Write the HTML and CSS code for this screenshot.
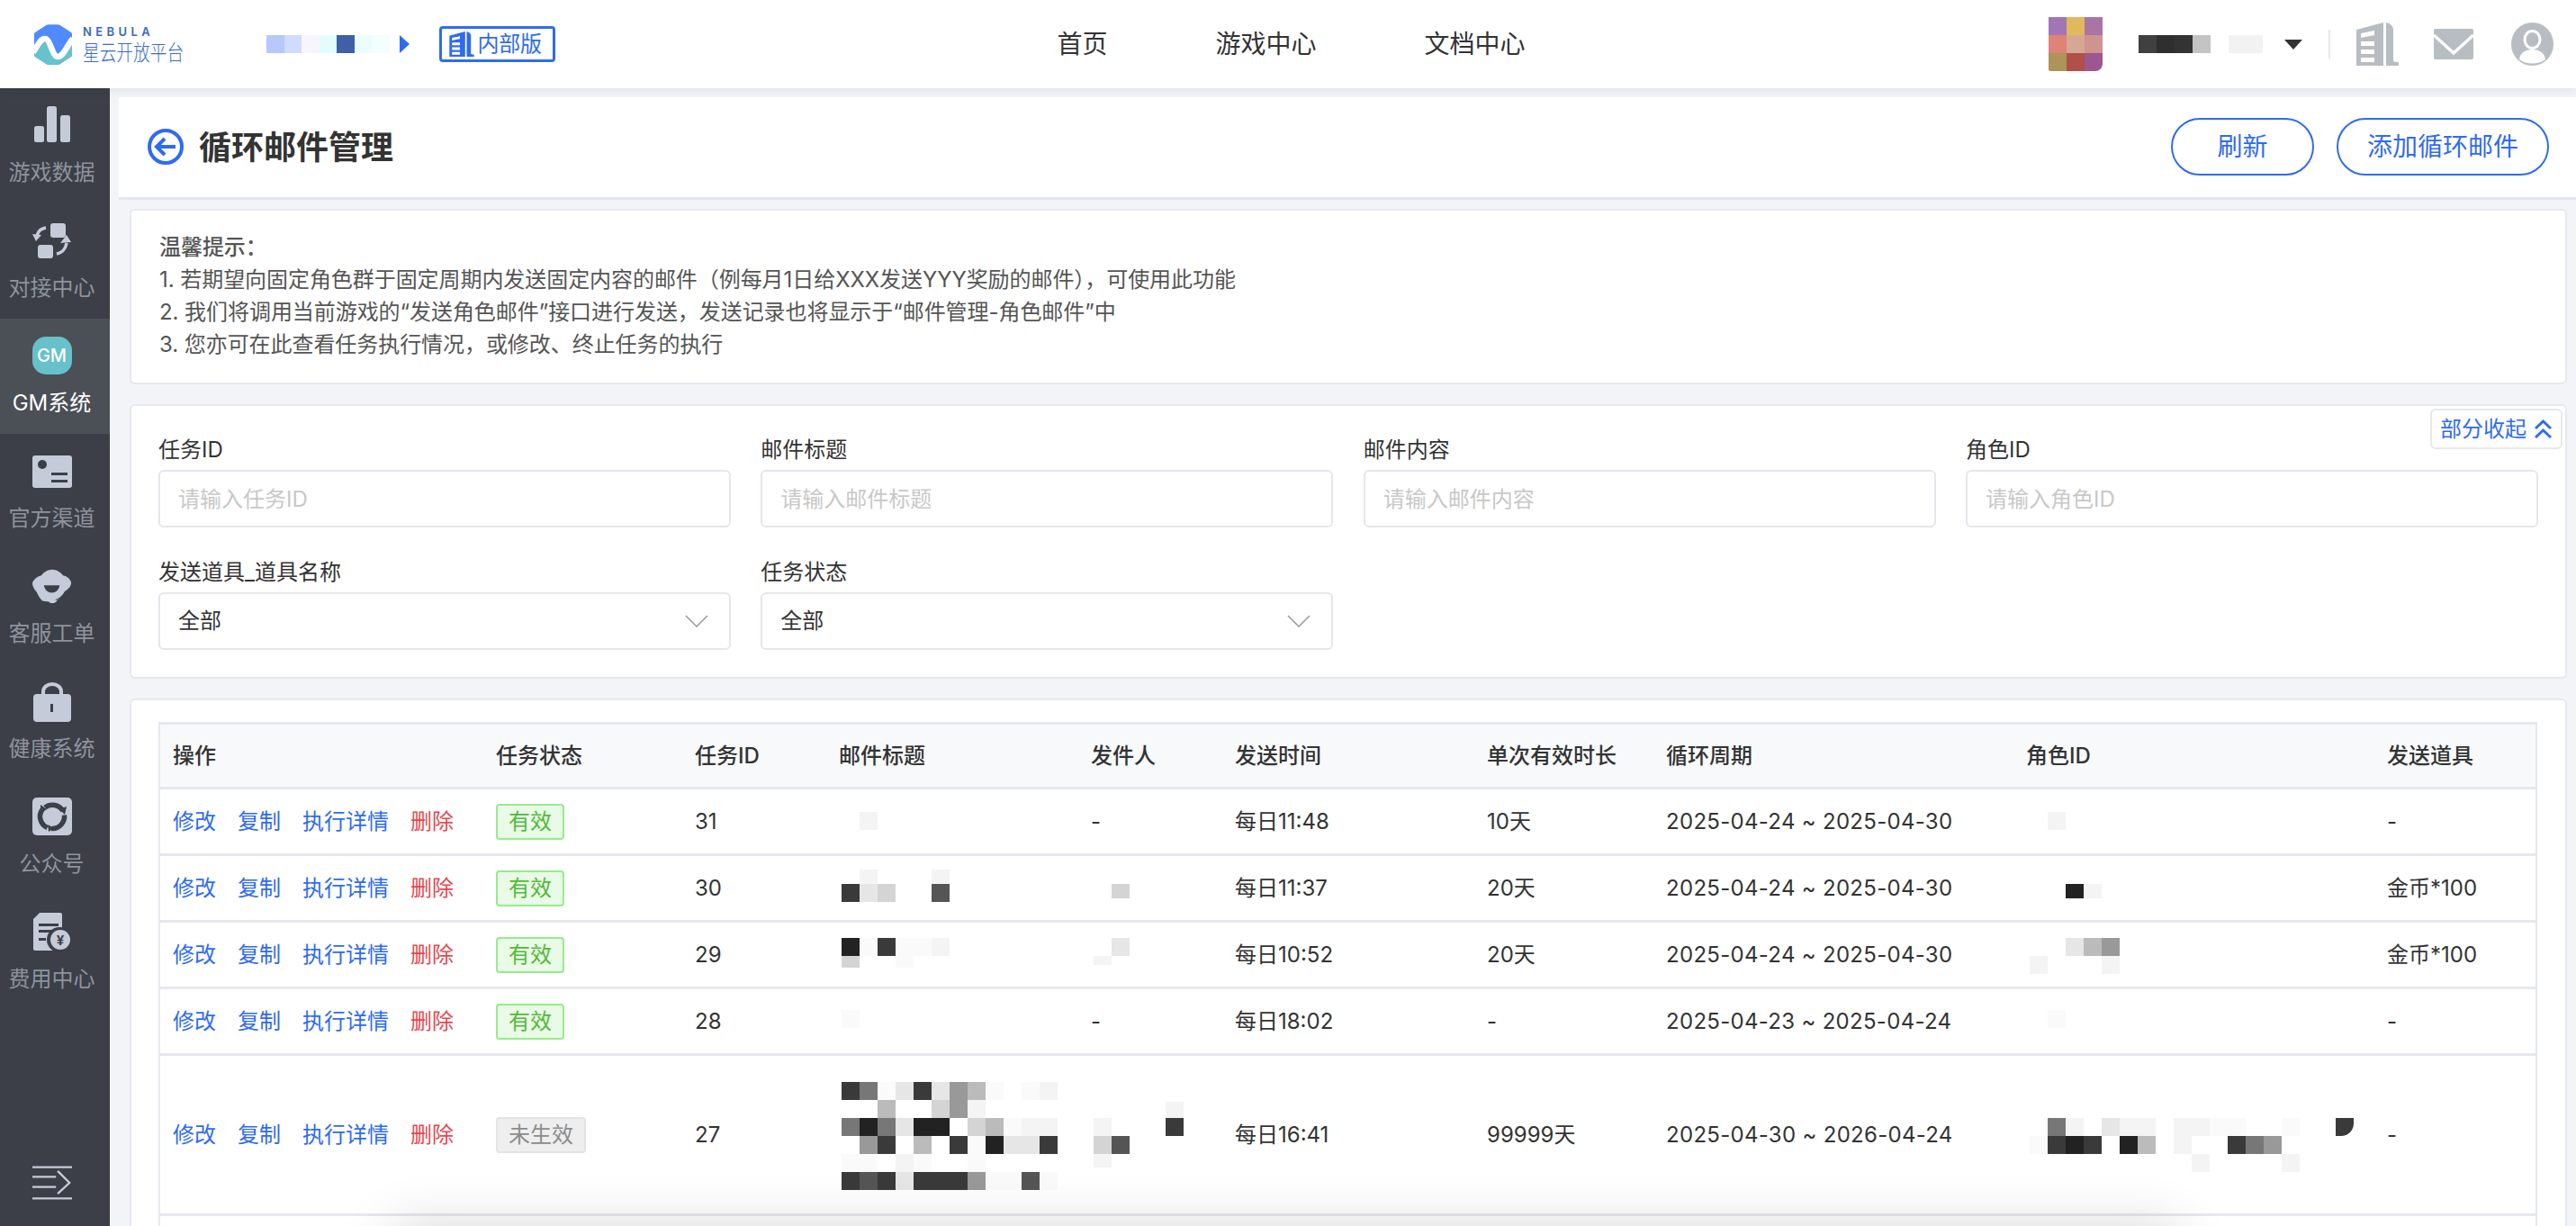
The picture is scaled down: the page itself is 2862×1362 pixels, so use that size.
FILE: index.html
```html
<!DOCTYPE html>
<html lang="zh-CN">
<head>
<meta charset="utf-8">
<title>循环邮件管理</title>
<link rel="stylesheet" href="styles.css">
</head>
<body>
<div class="app">
  <header class="top">
    <div class="logo">
      <svg class="logo-mark" viewBox="0 0 42 45">
        <path fill="#4f8bff" d="M14 .5C15 0 27 0 28 .5L41 9c.7.5 1 1 1 2v23c0 1-.3 1.500-1 2l-13 8.500c-1 .5-13 .5-14 0L1 36c-.7-.5-1-1-1-2V11c0-1 .3-1.500 1-2z"/>
        <path fill="#68c2cc" d="M0 30 L11 18 L26 37 L42 18 V34c0 1-.3 1.500-1 2l-13 8.500c-1 .5-13 .5-14 0L1 36c-.7-.5-1-1-1-2z"/>
        <path fill="none" stroke="#fff" stroke-width="6.500" stroke-linejoin="round" d="M-1 31 C4 23 7 16 12 16 C18 16 20 36 26 36 C33 36 37 22 43 16"/>
      </svg>
      <div class="logo-text">
        <div class="logo-en">NEBULA</div>
        <div class="logo-cn">星云开放平台</div>
      </div>
    </div>
    <div class="crumb"><i class="c1"></i><i class="c2"></i><i class="c3"></i><i class="c4"></i><i class="c5"></i><i class="c6"></i><i class="c7"></i></div>
    <span class="crumb-arrow"></span>
    <div class="edition">
      <svg class="edition-icon" viewBox="0 0 47 48"><path fill="#2f6bf0" d="M0 8 30 0V48H0zM5 12v5l15-3v-5zM5 21v5h15v-5zM5 30v5h15v-5zM5 39v5h15v-5z"/><path fill="#2f6bf0" d="M33 0c5 1 8 4 8 8v34c0 1 1 2 6 2v4H33z"/></svg>
      <span>内部版</span>
    </div>
    <nav class="nav"><a>首页</a><a>游戏中心</a><a>文档中心</a></nav>
    <div class="user">
      <div class="avatar"><i class="a1"></i><i class="a2"></i><i class="a3"></i><i class="a4"></i><i class="a5"></i><i class="a6"></i><i class="a7"></i><i class="a8"></i><i class="a9"></i></div>
      <div class="uname"><i class="n1"></i><i class="n2"></i><i class="n3"></i><i class="n4"></i></div>
      <div class="uname2"></div>
      <span class="caret"></span>
      <span class="divider"></span>
      <svg class="hi-building" viewBox="0 0 47 48"><path fill="#b8bdc4" d="M0 8 30 0V48H0zM5 12v5l15-3v-5zM5 21v5h15v-5zM5 30v5h15v-5zM5 39v5h15v-5z"/><path fill="#b8bdc4" d="M33 0c5 1 8 4 8 8v34c0 1 1 2 6 2v4H33z"/></svg>
      <svg class="hi-mail" viewBox="0 0 44 34"><path fill="#b8bdc4" d="M2 0h40a2 2 0 0 1 2 2v30a2 2 0 0 1-2 2H2a2 2 0 0 1-2-2V2a2 2 0 0 1 2-2z"/><path fill="none" stroke="#fff" stroke-width="3.500" d="M0 7 22 27 44 7"/></svg>
      <svg class="hi-user" viewBox="0 0 47 48"><ellipse cx="23.500" cy="24" rx="23.500" ry="24" fill="#b8bdc4"/><ellipse cx="23.500" cy="19" rx="8.500" ry="9.500" fill="#b8bdc4" stroke="#fff" stroke-width="3"/><path fill="#fff" d="M9 41c1-7 6-11 14.500-11S37 34 38 41c-4 3-9 4.500-14.500 4.500S13 44 9 41z"/></svg>
    </div>
  </header>

  <aside class="side">
    <a class="side-item">
      <span class="side-ic"><svg viewBox="0 0 44 44"><rect x="2" y="22" width="11" height="18" rx="2.500"/><rect x="16" y="0" width="11" height="40" rx="2.500"/><rect x="31" y="10" width="11" height="30" rx="2.500"/></svg></span>
      <span class="side-tx">游戏数据</span>
    </a>
    <a class="side-item">
      <span class="side-ic"><svg viewBox="0 0 44 44"><rect x="20" y="2" width="17" height="16" rx="3"/><rect x="6" y="26" width="17" height="15" rx="3"/><path fill="none" stroke="#c5cbd9" stroke-width="3.500" d="M15 7C9 8 6 11 5 16"/><path d="M0 14 10 15 4 22z"/><path fill="none" stroke="#c5cbd9" stroke-width="3.500" d="M27 36c6-1 10-6 11-12"/><path d="M31 24 43 23 38 15z"/></svg></span>
      <span class="side-tx">对接中心</span>
    </a>
    <a class="side-item active">
      <span class="side-ic"><span class="gm">GM</span></span>
      <span class="side-tx">GM系统</span>
    </a>
    <a class="side-item">
      <span class="side-ic"><svg viewBox="0 0 44 44"><rect x="0" y="4" width="44" height="36" rx="3"/><circle cx="11" cy="14" r="5" fill="#3c3f47"/><rect x="21" y="23" width="18" height="3" fill="#3c3f47"/><rect x="21" y="31" width="18" height="3" fill="#3c3f47"/></svg></span>
      <span class="side-tx">官方渠道</span>
    </a>
    <a class="side-item">
      <span class="side-ic"><svg viewBox="0 0 48 42"><path d="M24 0c5 0 10 3 13 7 6 1 10 6 10 9 0 4-3 7-7 10-3 5-7 9-10 11-1 4-8 5-10 2-3 0-6-1-8-1-3-3-5-7-7-11-3-3-5-7-5-10 0-4 6-9 11-10C14 3 19 0 24 0z"/><path fill="#3c3f47" d="M14 19h19c-1 6-5 9-9.500 9S15 25 14 19z"/><path fill="none" stroke="#3c3f47" stroke-width="1" d="M40 26c-2 5-7 9-12 11"/></svg></span>
      <span class="side-tx">客服工单</span>
    </a>
    <a class="side-item">
      <span class="side-ic"><svg viewBox="0 0 44 44"><path fill="none" stroke="#c5cbd9" stroke-width="4" d="M12 14V10a10 8 0 0 1 20 0v4"/><rect x="1" y="13" width="42" height="31" rx="4"/><rect x="20" y="24" width="3" height="9" fill="#3c3f47"/></svg></span>
      <span class="side-tx">健康系统</span>
    </a>
    <a class="side-item">
      <span class="side-ic"><svg viewBox="0 0 44 44"><rect x="0" y="0" width="44" height="42" rx="5"/><g fill="none" stroke="#3c3f47" stroke-width="5.500"><path d="M14 11A13.500 13.500 0 0 1 34 15"/><path transform="rotate(120 22 21)" d="M14 10A13.500 13.500 0 0 1 34 15"/><path transform="rotate(240 22 21)" d="M14 10A13.500 13.500 0 0 1 34 15"/></g><g fill="#3c3f47"><path d="M30 13 38 10 36 19z"/><path d="M24 34 18 38 17 30z"/><path d="M9 18 9 8 16 13z"/></g></svg></span>
      <span class="side-tx">公众号</span>
    </a>
    <a class="side-item">
      <span class="side-ic"><svg viewBox="0 0 44 44"><path d="M8 0H31a2 2 0 0 1 2 2V42H3a2 2 0 0 1-2-2V7z"/><rect x="7" y="12" width="22" height="3" fill="#3c3f47"/><rect x="7" y="19" width="19" height="3" fill="#3c3f47"/><rect x="7" y="28" width="8" height="3" fill="#3c3f47"/><circle cx="30" cy="30" r="14" fill="#3c3f47"/><circle cx="31" cy="30" r="11" fill="#c5cbd9"/><text class="yuan" x="31" y="36" text-anchor="middle">¥</text></svg></span>
      <span class="side-tx">费用中心</span>
    </a>
    <a class="side-toggle">
      <svg viewBox="0 0 47 40"><g stroke="#c5cbd9" stroke-width="2.500" fill="none"><path d="M0 1.500H47M0 13H28M0 25H28M0 38.500H47M30 6 44 20 30 33"/></g></svg>
    </a>
  </aside>

  <main class="main">
    <div class="titlebar">
      <svg class="back" viewBox="0 0 40 40"><circle cx="20" cy="20" r="18" fill="none" stroke="#2f6bf0" stroke-width="4"/><path fill="none" stroke="#2f6bf0" stroke-width="4" d="M31 20H11M19 11 10 20 19 29"/></svg>
      <h1>循环邮件管理</h1>
      <div class="title-btns">
        <button class="pill pill-sm">刷新</button>
        <button class="pill pill-lg">添加循环邮件</button>
      </div>
    </div>

    <section class="card hint">
      <p class="hint-h">温馨提示：</p>
      <p>1. 若期望向固定角色群于固定周期内发送固定内容的邮件（例每月1日给XXX发送YYY奖励的邮件），可使用此功能</p>
      <p>2. 我们将调用当前游戏的“发送角色邮件”接口进行发送，发送记录也将显示于“邮件管理-角色邮件”中</p>
      <p>3. 您亦可在此查看任务执行情况，或修改、终止任务的执行</p>
    </section>

    <section class="card filters">
      <button class="fold">部分收起<svg viewBox="0 0 21 22"><path fill="none" stroke="#2f6bf0" stroke-width="3" d="M2 10 10.500 2 19 10M2 20 10.500 12 19 20"/></svg></button>
      <div class="fgrid">
        <label class="field"><span>任务ID</span><input placeholder="请输入任务ID"></label>
        <label class="field"><span>邮件标题</span><input placeholder="请输入邮件标题"></label>
        <label class="field"><span>邮件内容</span><input placeholder="请输入邮件内容"></label>
        <label class="field"><span>角色ID</span><input placeholder="请输入角色ID"></label>
        <div class="field"><span>发送道具_道具名称</span><div class="sel">全部<svg viewBox="0 0 26 14"><path fill="none" stroke="#999" stroke-width="1.500" d="M1 1 13 13 25 1"/></svg></div></div>
        <div class="field"><span>任务状态</span><div class="sel">全部<svg viewBox="0 0 26 14"><path fill="none" stroke="#999" stroke-width="1.500" d="M1 1 13 13 25 1"/></svg></div></div>
      </div>
    </section>

    <section class="card tcard">
      <table class="tbl">
        <colgroup><col class="k1"><col class="k2"><col class="k3"><col class="k4"><col class="k5"><col class="k6"><col class="k7"><col class="k8"><col class="k9"><col class="k10"></colgroup>
        <thead>
          <tr><th>操作</th><th>任务状态</th><th>任务ID</th><th>邮件标题</th><th>发件人</th><th>发送时间</th><th>单次有效时长</th><th>循环周期</th><th>角色ID</th><th>发送道具</th></tr>
        </thead>
        <tbody>
          <tr>
            <td><div class="acts"><a>修改</a><a>复制</a><a>执行详情</a><a class="del">删除</a></div></td>
            <td><span class="tag ok">有效</span></td><td>31</td>
            <td><div class="mos w1 t1"><i class="b"></i></div></td>
            <td>-</td><td>每日11:48</td><td>10天</td><td class="date">2025-04-24 ~ 2025-04-30</td>
            <td><div class="mos w1 r1"><i class="b"></i></div></td><td>-</td>
          </tr>
          <tr>
            <td><div class="acts"><a>修改</a><a>复制</a><a>执行详情</a><a class="del">删除</a></div></td>
            <td><span class="tag ok">有效</span></td><td>30</td>
            <td><div class="mos w6 t2"><i></i><i class="b"></i><i></i><i></i><i></i><i class="b"></i><i class="i"></i><i class="c"></i><i class="d"></i><i></i><i></i><i class="h"></i></div></td>
            <td><div class="mos w2 s2"><i></i><i class="d"></i></div></td>
            <td>每日11:37</td><td>20天</td><td class="date">2025-04-24 ~ 2025-04-30</td>
            <td><div class="mos w2 r2"><i class="j"></i><i class="b"></i></div></td><td>金币*100</td>
          </tr>
          <tr>
            <td><div class="acts"><a>修改</a><a>复制</a><a>执行详情</a><a class="del">删除</a></div></td>
            <td><span class="tag ok">有效</span></td><td>29</td>
            <td><div class="mos w6 t3"><i class="j"></i><i class="a"></i><i class="i"></i><i class="a"></i><i class="a"></i><i class="b"></i><i class="d"></i><i></i><i></i><i class="a"></i><i></i><i></i></div></td>
            <td><div class="mos w2 s3"><i></i><i class="c"></i><i class="b"></i><i></i></div></td>
            <td>每日10:52</td><td>20天</td><td class="date">2025-04-24 ~ 2025-04-30</td>
            <td><div class="mos w5 r3"><i></i><i></i><i class="c"></i><i class="e"></i><i class="f"></i><i class="b"></i><i></i><i></i><i></i><i class="b"></i></div></td><td>金币*100</td>
          </tr>
          <tr>
            <td><div class="acts"><a>修改</a><a>复制</a><a>执行详情</a><a class="del">删除</a></div></td>
            <td><span class="tag ok">有效</span></td><td>28</td>
            <td><div class="mos w1 t4"><i class="a"></i></div></td>
            <td>-</td><td>每日18:02</td><td>-</td><td class="date">2025-04-23 ~ 2025-04-24</td>
            <td><div class="mos w1 r4"><i class="a"></i></div></td><td>-</td>
          </tr>
          <tr class="tall">
            <td><div class="acts"><a>修改</a><a>复制</a><a>执行详情</a><a class="del">删除</a></div></td>
            <td><span class="tag off">未生效</span></td><td>27</td>
            <td><div class="mos w12 t5">
              <i class="i"></i><i class="g"></i><i class="a"></i><i class="c"></i><i class="i"></i><i class="c"></i><i class="f"></i><i class="e"></i><i class="a"></i><i></i><i class="a"></i><i class="b"></i>
              <i></i><i></i><i class="e"></i><i></i><i></i><i class="d"></i><i class="f"></i><i class="b"></i><i></i><i></i><i></i><i></i>
              <i class="g"></i><i class="j"></i><i class="g"></i><i class="c"></i><i class="j"></i><i class="j"></i><i></i><i class="d"></i><i class="e"></i><i class="a"></i><i class="b"></i><i class="b"></i>
              <i></i><i class="f"></i><i class="i"></i><i></i><i class="e"></i><i></i><i class="i"></i><i class="a"></i><i class="j"></i><i class="c"></i><i class="c"></i><i class="i"></i>
              <i class="a"></i><i class="a"></i><i></i><i class="b"></i><i class="a"></i><i></i><i></i><i class="a"></i><i></i><i></i><i></i><i></i>
              <i class="i"></i><i class="h"></i><i class="i"></i><i class="c"></i><i class="i"></i><i class="i"></i><i class="i"></i><i class="f"></i><i class="a"></i><i class="a"></i><i class="h"></i><i class="a"></i>
            </div></td>
            <td><div class="mos w5 s5">
              <i></i><i></i><i></i><i></i><i class="b"></i>
              <i class="b"></i><i></i><i></i><i></i><i class="i"></i>
              <i class="d"></i><i class="h"></i><i></i><i></i><i></i>
              <i class="b"></i><i></i><i></i><i></i><i></i>
            </div></td>
            <td>每日16:41</td><td>99999天</td><td class="date">2025-04-30 ~ 2026-04-24</td>
            <td><div class="mos w18 r5">
              <i></i><i class="g"></i><i class="b"></i><i></i><i class="c"></i><i class="b"></i><i class="b"></i><i></i><i class="b"></i><i class="b"></i><i class="a"></i><i class="a"></i><i></i><i></i><i class="a"></i><i></i><i></i><i class="i round"></i>
              <i class="a"></i><i class="i"></i><i class="j"></i><i class="i"></i><i></i><i class="j"></i><i class="e"></i><i></i><i class="b"></i><i></i><i></i><i class="i"></i><i class="g"></i><i class="f"></i><i></i><i></i><i></i><i></i>
              <i></i><i></i><i></i><i></i><i></i><i></i><i></i><i></i><i></i><i class="b"></i><i></i><i></i><i></i><i></i><i class="b"></i><i></i><i></i><i></i>
            </div></td><td>-</td>
          </tr>
          <tr><td></td><td></td><td></td><td></td><td></td><td></td><td></td><td></td><td></td><td></td></tr>
        </tbody>
      </table>
    </section>
  </main>
</div>
<div class="sheet"></div>
</body>
</html>
```

FILE: styles.css
```css
* { box-sizing: border-box; }
html, body { margin: 0; height: 100%; overflow: hidden; }
body {
  width: 2862px; height: 1362px; background: #f3f4f8; color: #333;
  font: 400 24px/36px Inter, "Noto Sans CJK SC", sans-serif;
}
i { display: block; font-style: normal; }
a { color: inherit; text-decoration: none; }
p { margin: 0; }
button { font: inherit; background: #fff; cursor: pointer; }

.app { display: grid; grid-template-columns: 122px 1fr; grid-template-rows: 98px 1fr; height: 1362px; }

/* top bar */
.top {
  grid-column: 1 / 3; display: flex; align-items: center; background: #fff;
  padding: 0 25px 0 38px; position: relative; z-index: 2;
  box-shadow: 0 2px 10px rgba(30, 40, 70, .09);
}
.logo { display: flex; align-items: center; gap: 12px; width: 166px; }
.logo-mark { width: 42px; height: 45px; flex: none; }
.logo-text { flex: none; width: 120px; }
.logo-en { font: 600 13px/14px Inter, sans-serif; letter-spacing: 4.400px; color: #3a68bb; margin-bottom: 2px; }
.logo-cn { font: 300 18.700px/26px "Noto Sans CJK SC", sans-serif; color: #3a6cc4; transform: scaleY(1.25); }
.crumb { display: flex; margin-left: 92px; }
.crumb i { width: 19.500px; height: 20px; }
.c1 { background: #b7c8fa; } .c2 { background: #d0dcfd; } .c3 { background: #f8f5fd; }
.c4 { background: #e3fdfc; } .c5 { background: #3f60a5; } .c6 { background: #ebfdfd; } .c7 { background: #f3feff; }
.crumb-arrow { margin-left: 11px; border-left: 11px solid #2f6bf0; border-top: 10.500px solid transparent; border-bottom: 10.500px solid transparent; }
.edition {
  margin-left: 33px; width: 129px; height: 40px; display: flex; align-items: center; gap: 4px; padding-left: 8px;
  border: 3px solid #2f6bf0; border-radius: 4px; color: #2f6bf0; line-height: 30px;
}
.edition-icon { width: 28px; height: 28px; flex: none; }
.edition span { letter-spacing: -.3px; }
.nav { display: flex; gap: 120px; margin-left: 558px; font-size: 28px; color: #333; }
.user { margin-left: auto; display: flex; align-items: center; }
.avatar { width: 60px; height: 60px; display: grid; grid-template-columns: repeat(3, 20px); grid-auto-rows: 20px; border-radius: 0 0 8px 2px; overflow: hidden; }
.a1 { background: #a076b6; } .a2 { background: #e0b95a; } .a3 { background: #aa74a4; }
.a4 { background: #df8278; } .a5 { background: #d6a894; } .a6 { background: #cf9390; }
.a7 { background: #ad9459; } .a8 { background: #b14f49; } .a9 { background: #9d568f; }
.uname { display: flex; margin-left: 40px; }
.uname i { width: 20px; height: 20px; }
.n1 { background: #404040; } .n2 { background: #2f2f2f; } .n3 { background: #333; } .n4 { background: #c4c4c4; }
.uname2 { width: 38px; height: 20px; background: #f2f2f2; margin-left: 20px; }
.caret { margin-left: 24px; border-top: 11px solid #333; border-left: 10px solid transparent; border-right: 10px solid transparent; }
.divider { width: 2px; height: 32px; background: #e8e8e8; margin-left: 29px; }
.hi-building { width: 47px; height: 48px; margin-left: 29px; }
.hi-mail { width: 44px; height: 34px; margin-left: 39px; }
.hi-user { width: 47px; height: 48px; margin-left: 42px; }

/* sidebar */
.side { background: #3c3f47; display: flex; flex-direction: column; }
.side-item { height: 128px; flex: none; display: flex; flex-direction: column; align-items: center; padding: 20px 7px 0 0; }
.side-item.active { background: #4b4f56; }
.side-ic { width: 44px; height: 44px; display: block; }
.side-ic svg { width: 44px; height: 44px; display: block; fill: #c5cbd9; }
.side-tx { margin-top: 14px; font-size: 24px; line-height: 32px; color: #8e939e; white-space: nowrap; }
.active .side-tx { color: #fff; }
.gm {
  display: flex; align-items: center; justify-content: center; width: 44px; height: 42px; border-radius: 15px;
  background: #66c1cb; color: #fff; font: 500 20px/1 Inter, sans-serif;
}
.yuan { font: 700 15px Inter, sans-serif; fill: #3c3f47; }
.side-toggle { margin: auto 7px 28px 0; align-self: center; width: 44px; height: 40px; }
.side-toggle svg { display: block; width: 44px; height: 40px; }

/* main */
.main { padding: 10px 0 0 10px; min-width: 0; overflow: hidden; }
.titlebar { height: 114px; background: #fff; border-bottom: 3px solid #e4e6ec; display: flex; align-items: center; padding: 0 30px 0 32px; }
.back { width: 40px; height: 40px; flex: none; margin-top: -2px; }
.titlebar h1 { margin: 0 0 0 17px; font: 700 36px/44px Inter, "Noto Sans CJK SC", sans-serif; color: #333; }
.title-btns { margin-left: auto; display: flex; gap: 25px; margin-top: -2px; }
.pill { height: 64px; border: 2.500px solid #2f6bf0; border-radius: 32px; color: #2f6bf0; font-size: 28px; line-height: 36px; padding: 0; }
.pill-sm { width: 159px; }
.pill-lg { width: 236px; }

.card { background: #fff; border: 2px solid #e6e8ee; border-radius: 6px; margin: 22px 10px 0 12px; position: relative; }
.hint { margin-top: 10px; height: 195px; padding: 23px 31px 0; color: #555; letter-spacing: -.06px; }
.hint-h { font-weight: 500; color: #555; }

.filters { height: 305px; padding: 31px 30px 0; }
.fold {
  position: absolute; top: 3px; right: 3px; width: 147px; height: 45px; border: 2px solid #e6e8ee; border-radius: 6px;
  color: #2f6bf0; display: flex; align-items: center; gap: 8px; padding: 0 0 0 9px; font-size: 24px; line-height: 30px;
}
.fold svg { width: 21px; height: 22px; flex: none; }
.fgrid { display: grid; grid-template-columns: repeat(4, 636px); column-gap: 33.330px; row-gap: 32px; }
.field { display: block; }
.field > span { display: block; height: 36px; line-height: 36px; margin-bottom: 4px; color: #333; }
.field input, .sel {
  display: flex; align-items: center; width: 100%; height: 64px; border: 2px solid #e4e6ec; border-radius: 6px; padding: 0 20px;
  font: inherit; color: #333; background: #fff; outline: none;
}
.field input::placeholder { color: #c8c8c8; opacity: 1; }
.sel { justify-content: space-between; padding-right: 23px; }
.sel svg { width: 26px; height: 14px; flex: none; }

.tcard { padding: 24px 30px 0; height: 700px; }
.tbl { border-collapse: separate; border-spacing: 0; table-layout: fixed; width: 2643px; border-left: 2px solid #e6e8ee; border-right: 2px solid #e6e8ee; }
.k1 { width: 357px; } .k2 { width: 221px; } .k3 { width: 160px; } .k4 { width: 280px; } .k5 { width: 160px; }
.k6 { width: 280px; } .k7 { width: 199px; } .k8 { width: 400px; } .k9 { width: 401px; } .k10 { width: 181px; }
.tbl th, .tbl td { padding: 0 16px; text-align: left; white-space: nowrap; border-bottom: 3px solid #e6e8ee; position: relative; }
.tbl th:first-child, .tbl td:first-child { padding-left: 14px; }
.tbl th { height: 75px; background: #f8f9fb; font-weight: 500; border-top: 3px solid #e6e8ee; }
.tbl td { height: 74px; font-weight: 400; }
.tbl .tall td { height: 178px; }
.date { letter-spacing: .3px; }
.acts { display: flex; gap: 24px; color: #2f6bf0; }
.del { color: #e5484d; }
.tag { display: inline-block; height: 40px; line-height: 36px; border: 2px solid; border-radius: 4px; padding: 0 12px; vertical-align: middle; }
.ok { background: #e9fbe6; border-color: #95ec8d; color: #52b93a; }
.off { background: #eeeeee; border-color: #e3e3e3; color: #8c8c8c; }

/* redaction mosaics laid over cell text */
.mos { position: absolute; display: grid; grid-auto-rows: 20px; }
.w1 { grid-template-columns: 20px; }
.w2 { grid-template-columns: repeat(2, 20px); }
.w5 { grid-template-columns: repeat(5, 20px); }
.w6 { grid-template-columns: repeat(6, 20px); }
.w12 { grid-template-columns: repeat(12, 20px); }
.w18 { grid-template-columns: repeat(18, 20px); }
.a { background: #fafafa; } .b { background: #f4f4f4; } .c { background: #e6e6e6; } .d { background: #d4d4d4; }
.e { background: #bbb; } .f { background: #999; } .g { background: #777; } .h { background: #555; }
.i { background: #3a3a3a; } .j { background: #222; }
.round { border-radius: 0 0 14px 0; }
.t1 { left: 39px; top: 25px; }
.t2 { left: 19px; top: 15px; grid-template-rows: 16px 20px; }
.t3 { left: 19px; top: 17px; grid-template-rows: 20px 13px; }
.t4 { left: 19px; top: 23px; }
.t5 { left: 19px; top: 29px; }
.s2 { left: 19px; top: 31px; grid-auto-rows: 16px; }
.s3 { left: 19px; top: 17px; grid-template-rows: 20px 10px; }
.s5 { left: 19px; top: 51px; grid-template-rows: 18px 20px 20px 15px; }
.r1 { left: 40px; top: 25px; }
.r2 { left: 60px; top: 31px; grid-auto-rows: 16px; }
.r3 { left: 20px; top: 17px; }
.r4 { left: 40px; top: 23px; }
.r5 { left: 20px; top: 69px; }

/* soft shadow of a sheet just below the fold */
.sheet { position: fixed; left: 437px; width: 1981px; top: 1362px; height: 60px; background: #ebebeb; box-shadow: 0 0 60px 0 rgba(0, 0, 0, .16); z-index: 3; }
```
